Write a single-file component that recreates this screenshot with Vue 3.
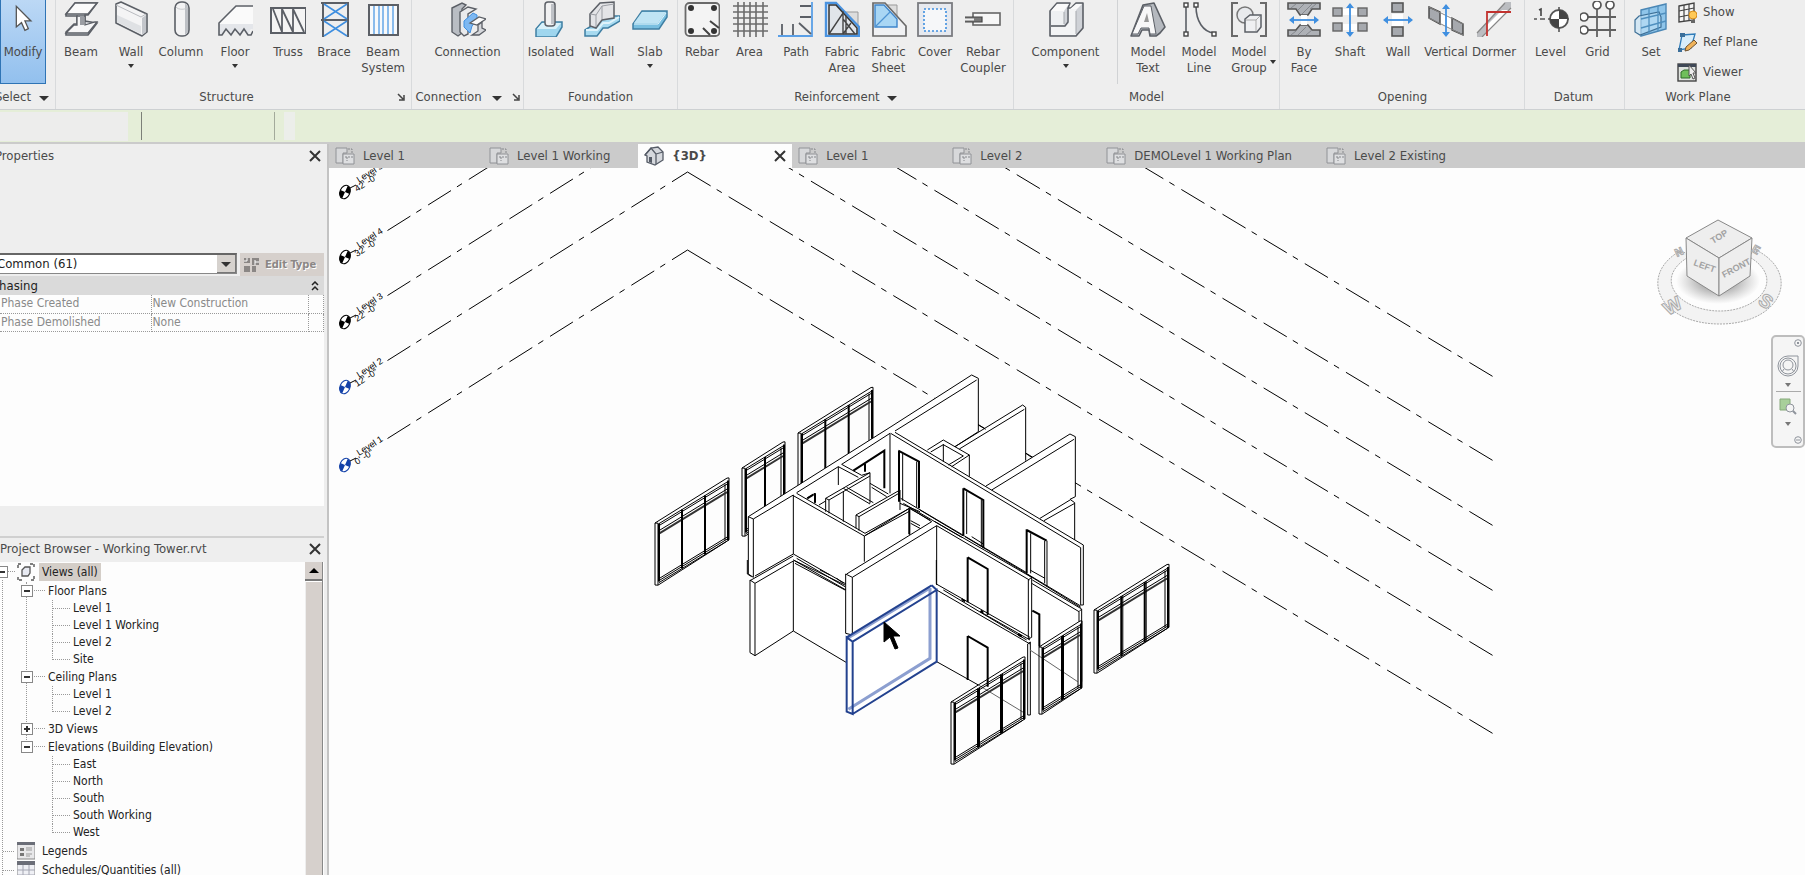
<script setup>
const G = '#5b5f66'
const B = '#3f8fe0'

const icons = {
  modify: `<path d="M12 5v24l6-5 4 9 4-2-4-9h7z" transform="translate(1 1) scale(.86)" fill="#fff" stroke="#555" stroke-width="1.5"/>`,
  beam: `<path d="M12 2H34L25 14H22V20L34 22L25 34H3V31L11 23H14V15H3V13Z" fill="#dfe1e5" stroke="${G}" stroke-width="1.6"/><path d="M12 2H34L25 13H3Z" fill="#fbfbfb" stroke="${G}" stroke-width="1.4"/><path d="M22 15V24L32 21H34L25 32H3L11 24H14V15Z" fill="#f6f6f7" stroke="${G}" stroke-width="1.3"/><path d="M17 15H21V24H17Z" fill="#9a9da3"/>`,
  wall: `<path d="M3 3L8 1L34 13V31L29 35L3 22Z" fill="#f4f4f5" stroke="${G}" stroke-width="1.6" stroke-linejoin="round"/><path d="M3 4L28 16L33 13" fill="none" stroke="#b9bbc0"/><path d="M29 17L33 14V31L29 34Z" fill="#c3c6cb"/><path d="M4 14L28 25V33L4 21Z" fill="#dfe1e4"/>`,
  column: `<rect x="12" y="1" width="14" height="34" rx="6" fill="#f3f3f4" stroke="${G}" stroke-width="1.6"/><path d="M22 3C24 3 25 5 25 7V31L22 34Z" fill="#bdc0c5"/><path d="M13 6C15 9 23 9 25 6" fill="none" stroke="#c8cacd"/>`,
  floor: `<path d="M36 4H19L2 22V34H6V30L10 27L14 33L18 27L22 33L26 27L29 33L32 33L35 27H36Z" fill="#fafafa"/><path d="M2 23H36V28H34L31 34L27 27L23 34L18 27L14 34L9 28L6 34H2Z" fill="#e4e6ea"/><path d="M36 5H19L2 22V34H5L9 28L14 34L18 28L23 34L27 28L31 34H34L36 30" fill="none" stroke="${G}" stroke-width="1.6"/>`,
  truss: `<path d="M1 7H36V32H1Z" fill="#f4f4f4" stroke="${G}" stroke-width="2"/><path d="M3 8L12 31V8L23 31V8L34 31" fill="none" stroke="${G}" stroke-width="1.8"/>`,
  brace: `<path d="M7 1V36M32 1V36M5 2H33M5 19H33" stroke="${G}" stroke-width="2"/><path d="M8 3L31 18M31 3L8 18M8 20L31 35M31 20L8 35" stroke="${B}" stroke-width="1.6"/>`,
  beamsystem: `<rect x="4" y="4" width="29" height="30" fill="#f7f9fb" stroke="${G}" stroke-width="2"/><path d="M9 5V33M14 5V33M18 5V33M23 5V33M28 5V33" stroke="#66a7e8" stroke-width="1.5"/>`,
  connection: `<path d="M2 7L12 2L16 4L12 8V32L8 35L2 31Z" fill="#b9bdc3" stroke="${G}" stroke-width="1.4"/><path d="M10 11L18 6L26 8L18 13V33L14 35L10 31Z" fill="#e9eaec" stroke="${G}" stroke-width="1.4"/><path d="M14 20L23 12L27 14V19L22 25L20 32L14 26Z" fill="#7db8f2" stroke="${B}"/><path d="M20 22L29 16L36 18L27 24Z" fill="#fafafa" stroke="${G}" stroke-width="1.3"/><path d="M28 24V30L22 34H29L36 29L32 27V21Z" fill="#d6d8dc" stroke="${G}" stroke-width="1.3"/>`,
  isolated: `<path d="M3 28L9 21H29V26L23 36H3Z" fill="#9fd6ee" stroke="#3f7fa3" stroke-width="1.5"/><path d="M4 28L9 22H28L23 28Z" fill="#d9f1fa"/><rect x="12" y="1" width="10" height="24" rx="3" fill="#f1f1f2" stroke="${G}" stroke-width="1.5"/><path d="M18 3H21V23H18Z" fill="#bfc2c7"/>`,
  fwall: `<path d="M1 29L9 24L13 20L28 15H36V20L24 27H19L13 35H1Z" fill="#a7daf0" stroke="#3f7fa3" stroke-width="1.5"/><path d="M2 29H13L19 22H25L35 16" fill="none" stroke="#dff3fb" stroke-width="2"/><path d="M6 13L16 2L30 1V17L18 19L12 27L6 25Z" fill="#e3e4e7" stroke="${G}" stroke-width="1.5"/><path d="M6 13L12 14L18 5L30 3M12 14V26M18 5V18" fill="none" stroke="#9b9ea4"/>`,
  slab: `<path d="M1 23L10 10H35V16L27 28H1Z" fill="#79bfe0" stroke="#3f7fa3" stroke-width="1.5"/><path d="M2 22L10 11H34L26 22Z" fill="#bfe4f4"/><path d="M2 23H26L34 12" fill="none" stroke="#e6f6fc"/>`,
  rebar: `<rect x="1.500" y="2" width="34" height="33" rx="4" fill="#f4f4f4" stroke="#6a6a6a" stroke-width="1.8"/><path d="M26 20L35 27M19 27L26 34" stroke="#444" stroke-width="2"/><g fill="#333"><circle cx="7" cy="7" r="3"/><circle cx="30" cy="7" r="3"/><circle cx="7" cy="30" r="3"/><circle cx="30" cy="30" r="3"/></g>`,
  area: `<path d="M6 1V36M12 1V36M18 1V36M24 1V36M31 1V36M1 5H36M1 11H36M1 17H36M1 23H36M1 30H36" stroke="#6c6c6c" stroke-width="1.6"/>`,
  path: `<path d="M34 1V35H0" fill="none" stroke="#5a9fe6" stroke-width="1.8"/><path d="M22 5H33M22 16H33M4 23V34M15 23V34M21 22L33 33" stroke="#5b5f66" stroke-width="1.8"/>`,
  fabricarea: `<path d="M15 11H34V30" fill="#ddd" stroke="#999"/><path d="M2 2H12L35 26V35H2Z" fill="#eef2f7" stroke="#4b93df" stroke-width="2.4"/><path d="M5 4V33H33V27L12 4Z" fill="#e1e5ea" stroke="#333" stroke-width="1.5"/><path d="M5 33L19 12V33M19 33L27 22M19 18L31 33M22 15V33" stroke="#444" stroke-width="1.4" fill="none"/>`,
  fabricsheet: `<path d="M14 4H26V28" fill="#ddd" stroke="#999"/><path d="M2 2H14L35 25V35H2Z" fill="#f0f1f3" stroke="#6a6a6a" stroke-width="1.7"/><path d="M4 4H13L26 18V26H4Z" fill="#a9d6f4" stroke="#3e85cb" stroke-width="1.4"/><path d="M4 26L19 11" stroke="#4f94d3" stroke-width="1.2"/>`,
  cover: `<rect x="1" y="2" width="34" height="33" fill="#e6e9ef" stroke="#7a7c80" stroke-width="1.8"/><rect x="7" y="8" width="22" height="22" fill="#f6f7f9" stroke="#3f8fe0" stroke-width="1.6" stroke-dasharray="2 2"/>`,
  coupler: `<rect x="8" y="12" width="27" height="12" fill="#f7f7f7" stroke="#666" stroke-width="1.6"/><path d="M0 16H17V21H0" fill="#777" stroke="#444" stroke-width="1.2"/><path d="M0 18.500H9" stroke="#eee" stroke-width="2"/>`,
  component: `<path d="M2 10L9 2H22L20 7H23L28 2H35V27L28 35H2Z" fill="#cfd2d7" stroke="${G}" stroke-width="1.6" stroke-linejoin="round"/><path d="M3 10L9 3H21L16 10ZM22 8L28 3H34L28 9Z" fill="#fafafa"/><path d="M3 10H16V24H3Z" fill="#eef0f2"/><path d="M21 8H28V34H3V26H17L21 22Z" fill="#f3f4f5"/><path d="M3 25H17L20 21V7" fill="none" stroke="${G}" stroke-width="1.400"/><path d="M16 11V23M28 10V33" stroke="#a5a8ad"/>`,
  modeltext: `<path d="M1 35L13 4L24 2L35 26L30 32L26 35H20L19 29H12L9 35Z" fill="#b5b9bf" stroke="${G}" stroke-width="1.6" stroke-linejoin="round"/><path d="M2 33L14 5H21L26 33H20L19 27H11L8 33Z" fill="#f7f7f8" stroke="${G}"/><path d="M14 21L17 12L19 21Z" fill="#999"/>`,
  modelline: `<path d="M5 5V32M15 5C15 20 22 31 33 32" fill="none" stroke="#5b5f66" stroke-width="1.6"/><g fill="#fff" stroke="#444" stroke-width="1.4"><rect x="3" y="2" width="4" height="4"/><rect x="3" y="31" width="4" height="4"/><rect x="13" y="2" width="4" height="4"/><rect x="31" y="31" width="4" height="4"/></g>`,
  modelgroup: `<path d="M7 2H1V35H7M29 2H35V35H29" fill="none" stroke="#6a6a6a" stroke-width="2"/><circle cx="14" cy="14" r="8" fill="#e8eaed" stroke="#777" stroke-width="1.5"/><path d="M14 18L19 14H30V26L26 31H14Z" fill="#eff0f2" stroke="${G}" stroke-width="1.5"/><path d="M15 19H25V30M25 19L29 15" fill="none" stroke="#aaa"/>`,
  byface: `<path d="M2 2H34V8H26L22 14H14L10 8H2Z M2 35H34V29H26L22 24H14L10 29H2Z" fill="#aeb1b6" stroke="#555" stroke-width="1.6"/><path d="M5 7L10 3M12 9L18 3M16 13L26 3M24 8L30 3M5 34L10 30M12 34L20 26M20 34L26 29" stroke="#85888d"/><path d="M15 14H21V24H15Z" fill="#fff"/><path d="M4 19H32" stroke="${B}" stroke-width="1.8"/><path d="M8 15L3 19L8 23ZM28 15L33 19L28 23Z" fill="${B}"/>`,
  shaft: `<g fill="#a6a9ae" stroke="#666" stroke-width="1.400"><rect x="1" y="7" width="9" height="8"/><rect x="26" y="7" width="9" height="8"/><rect x="1" y="22" width="9" height="8"/><rect x="26" y="22" width="9" height="8"/></g><path d="M11 8H25V14H11ZM11 23H25V29H11Z" fill="#fff"/><path d="M18 3V35" stroke="${B}" stroke-width="1.8"/><path d="M14 7L18 2L22 7ZM14 31L18 36L22 31Z" fill="${B}"/>`,
  owall: `<g fill="#a6a9ae" stroke="#555" stroke-width="1.600"><rect x="12" y="2" width="11" height="9"/><rect x="12" y="26" width="11" height="9"/></g><path d="M12 13H23V25H12Z" fill="#fff"/><path d="M4 19H32" stroke="${B}" stroke-width="1.8"/><path d="M8 15L3 19L8 23ZM28 15L33 19L28 23Z" fill="${B}"/>`,
  vertical: `<path d="M12 10L24 16V29L12 22Z" fill="#fff"/><path d="M1 6L12 11V23L1 17ZM24 17L35 23V34L24 29Z" fill="#a6a9ae" stroke="#444" stroke-width="1.400"/><path d="M1 6L35 23M1 17L35 34" stroke="#888"/><path d="M18 4V34" stroke="${B}" stroke-width="1.8"/><path d="M14 8L18 3L22 8ZM14 31L18 36L22 31Z" fill="${B}"/>`,
  dormer: `<path d="M1 32L29 1H35V7L6 36H1Z" fill="#bbbdc1"/><path d="M11 24L26 9H33L11 31Z" fill="#fff"/><path d="M1 32L29 2M6 36L35 7" stroke="#888" stroke-width="1.2"/><path d="M11 35V11H35" fill="none" stroke="#c2322f" stroke-width="1.8"/>`,
  level: `<path d="M1 18H4M7 18H12M15 18H36M26 6V31" stroke="#555" stroke-width="1.6"/><path d="M6 9L8 8V15" fill="none" stroke="#444" stroke-width="1.600"/><circle cx="26" cy="18" r="9" fill="#fff" stroke="#555" stroke-width="1.8"/><path d="M26 9A9 9 0 0 1 35 18H26ZM26 27A9 9 0 0 1 17 18H26Z" fill="#444"/>`,
  grid: `<path d="M8 16H36M8 29H36M17 8V36M30 8V36" stroke="#606060" stroke-width="1.8"/><g fill="#fff" stroke="#555" stroke-width="1.7"><circle cx="17" cy="4" r="4"/><circle cx="30" cy="4" r="4"/><circle cx="4" cy="16" r="4"/><circle cx="4" cy="29" r="4"/></g>`,
  set: `<path d="M8 9L33 3V28L8 35Z" fill="#8fc5ea" stroke="#4b87b5" stroke-width="1.4"/><path d="M2 19L6 15L26 11L28 16V26L7 34L2 31Z" fill="#c3e2f6" fill-opacity=".6" stroke="#3d6f96" stroke-width="1.2"/><path d="M16 7V33M25 5V30M8 18L33 12M8 27L33 20" stroke="#4f8fbe" stroke-width="1.3"/>`,
  show: `<path d="M2 4L17 1V18L2 20Z" fill="#f5f5f5" stroke="#444" stroke-width="1.4"/><path d="M7 3V19M12 2V18M2 9L17 6M2 15L17 12" stroke="#444" stroke-width="1.2"/><circle cx="16" cy="13" r="4" fill="#ffc957" stroke="#d58c1a"/><path d="M14 18H18V21H14Z" fill="#666"/>`,
  refplane: `<path d="M5 3L18 2L14 16L2 18Z" fill="#d8edfa" stroke="#2f7bb8" stroke-width="1.300"/><path d="M3 1H8V5H3ZM1 16H5V20H1Z" fill="#3b6f9a"/><path d="M9 15L17 8L20 11L12 18L8 19Z" fill="#f0b35a" stroke="#6e5230"/>`,
  viewer: `<rect x="1" y="2" width="18" height="17" fill="#dfe3df" stroke="#444" stroke-width="1.400"/><path d="M1 2H19V5H1Z" fill="#3f4856"/><path d="M4 10L7 8H13V16H4Z" fill="#6fbf5b" stroke="#2f6b29"/><path d="M12 3V14L14 12L16 17L18 16L16 11H19Z" fill="#eee" stroke="#555"/>`,
}

const panels = [
  { id: 'structure', title: 'Structure', launcher: true, tools: [
    { icon: 'beam', label: 'Beam' }, { icon: 'wall', label: 'Wall', menu: true }, { icon: 'column', label: 'Column' },
    { icon: 'floor', label: 'Floor', menu: true }, { icon: 'truss', label: 'Truss' }, { icon: 'brace', label: 'Brace' },
    { icon: 'beamsystem', label: 'Beam System' } ] },
  { id: 'connect', title: 'Connection', launcher: true, menu: true, tools: [{ icon: 'connection', label: 'Connection' }] },
  { id: 'foundation', title: 'Foundation', tools: [
    { icon: 'isolated', label: 'Isolated' }, { icon: 'fwall', label: 'Wall' }, { icon: 'slab', label: 'Slab', menu: true } ] },
  { id: 'reinforcement', title: 'Reinforcement', menu: true, tools: [
    { icon: 'rebar', label: 'Rebar' }, { icon: 'area', label: 'Area' }, { icon: 'path', label: 'Path' },
    { icon: 'fabricarea', label: 'Fabric Area' }, { icon: 'fabricsheet', label: 'Fabric Sheet' },
    { icon: 'cover', label: 'Cover' }, { icon: 'coupler', label: 'Rebar Coupler' } ] },
  { id: 'model', title: 'Model', tools: [
    { icon: 'component', label: 'Component', menu: true, divided: true }, { icon: 'modeltext', label: 'Model Text' },
    { icon: 'modelline', label: 'Model Line' }, { icon: 'modelgroup', label: 'Model Group', sideMenu: true } ] },
  { id: 'opening', title: 'Opening', tools: [
    { icon: 'byface', label: 'By Face' }, { icon: 'shaft', label: 'Shaft' }, { icon: 'owall', label: 'Wall' },
    { icon: 'vertical', label: 'Vertical' }, { icon: 'dormer', label: 'Dormer' } ] },
  { id: 'datums', title: 'Datum', tools: [{ icon: 'level', label: 'Level' }, { icon: 'grid', label: 'Grid' }] },
  { id: 'workplane', title: 'Work Plane', tools: [{ icon: 'set', label: 'Set' }],
    links: [{ icon: 'show', label: 'Show' }, { icon: 'refplane', label: 'Ref Plane' }, { icon: 'viewer', label: 'Viewer' }] },
]

const tabs = [
  { label: 'Level 1' }, { label: 'Level 1 Working' }, { label: '{3D}', active: true }, { label: 'Level 1' },
  { label: 'Level 2' }, { label: 'DEMOLevel 1 Working Plan' }, { label: 'Level 2 Existing' },
]

const groups = [
  { label: 'Floor Plans', open: true, items: ['Level 1', 'Level 1 Working', 'Level 2', 'Site'] },
  { label: 'Ceiling Plans', open: true, items: ['Level 1', 'Level 2'] },
  { label: '3D Views', open: false, items: [] },
  { label: 'Elevations (Building Elevation)', open: true, items: ['East', 'North', 'South', 'South Working', 'West'] },
]

const levels = [
  { name: 'Level 1', height: "0' -0\"", y: 438, color: '#1240a8' },
  { name: 'Level 2', height: "12' -0\"", y: 360, color: '#1240a8' },
  { name: 'Level 3', height: "22' -0\"", y: 295, color: '#000' },
  { name: 'Level 4', height: "32' -0\"", y: 230, color: '#000' },
  { name: 'Level 5', height: "42' -0\"", y: 165, color: '#000' },
  { name: '', height: '', y: 81, color: '#000' },
]

// Isometric curtain panel: rails, transom and mullions from its left edge, width and height
function curtain(x, y, w, h, bays) {
  const at = (dx, dy) => `${(x + dx).toFixed(1)} ${(y + dy - dx * 0.61).toFixed(1)}`
  const rail = (dy, from = 4) => `M${at(from, dy)}L${at(w - 2, dy)}`
  let thick = `M${at(4, 3)}L${at(4, h - 1)}M${at(w - 1, 2)}L${at(w - 1, h)}`
  let pale = ''
  for (let i = 1; i < bays; i++) {
    const dx = 4 + ((w - 5) * i) / bays
    thick += `M${at(dx, 3)}L${at(dx, h)}`
    pale += `M${at(dx + 1.500, 3)}L${at(dx + 1.500, h)}`
  }
  return {
    thin: `M${at(0, 0)}L${at(w - 2, -1)}L${at(w, 0)}V${(y + h - w * 0.61).toFixed(1)}L${at(3, h + 2)}L${at(0, h)}Z` +
      `M${at(0, 0)}L${at(3, 2)}V${(y + h).toFixed(1)}M${at(w - 4, 4)}L${at(w - 4, h - 2)}` + rail(3) + rail(5) + rail(10) + rail(h) + rail(h - 2) + rail(h - 4),
    thick, pale, bold: rail(13),
  }
}
const rear = [curtain(655, 523, 74, 62, 3), curtain(742, 468, 43, 68, 2), curtain(798, 433, 75, 62, 3)]
const front = [curtain(951, 702, 74, 62, 3), curtain(1039, 647, 43, 67, 2), curtain(1094, 610, 75, 63, 3)]
</script>

<template>
  <div class="app">
    <header class="ribbon">
      <section class="panel select">
        <div class="tools">
          <button class="tool current" type="button">
            <svg class="icon" viewBox="0 0 36 36" aria-hidden="true" v-html="icons.modify"></svg>
            <span class="label">Modify</span>
          </button>
        </div>
        <h2 class="title"><span>Select</span><i class="caret wide"></i></h2>
      </section>
      <section v-for="p in panels" :key="p.id" class="panel" :class="p.id">
        <div class="tools">
          <button v-for="t in p.tools" :key="t.icon" class="tool" :class="{ divided: t.divided }" type="button">
            <svg class="icon" viewBox="0 0 36 36" aria-hidden="true" v-html="icons[t.icon]"></svg>
            <span class="label">{{ t.label }}</span>
            <i v-if="t.menu" class="caret"></i>
            <i v-if="t.sideMenu" class="caret side"></i>
          </button>
          <div v-if="p.links" class="links">
            <button v-for="l in p.links" :key="l.icon" class="link" type="button">
              <svg viewBox="0 0 20 21" aria-hidden="true" v-html="icons[l.icon]"></svg>{{ l.label }}
            </button>
          </div>
        </div>
        <h2 class="title">
          <span>{{ p.title }}</span><i v-if="p.menu" class="caret wide"></i>
          <svg v-if="p.launcher" class="launcher" viewBox="0 0 8 8"><path d="M1 1L6 6M7 2V7H2" fill="none" stroke="#444" stroke-width="1.500" /></svg>
        </h2>
      </section>
    </header>

    <div class="options"><span class="slot"></span><span class="rule dark"></span><span class="rule"></span><span class="chip"></span></div>

    <div class="body">
      <aside class="dock">
        <section class="props">
          <div class="head">
            <h3 class="cut">Properties</h3>
            <button class="close" type="button" aria-label="Close Properties"><svg viewBox="0 0 12 12"><path d="M1 1L11 11M11 1L1 11" /></svg></button>
          </div>
          <div class="preview"></div>
          <div class="type">
            <div class="combo">
              <select aria-label="Selection filter"><option>Common (61)</option></select>
              <span class="drop"><i class="caret wide"></i></span>
            </div>
            <button class="edit" type="button">
              <svg viewBox="0 0 16 16"><path d="M0 1H6V6H0ZM0 9H6V15H0ZM8 1H15V8H8ZM8 9H12V15H8Z" fill="#8b8785" /><path d="M0 4H3M3 1V4M11 3V8M11 5H15" stroke="#fff" /></svg>Edit Type
            </button>
          </div>
          <div class="category"><span>Phasing</span>
            <svg viewBox="0 0 8 10"><path d="M1 4L4 1L7 4M1 9L4 6L7 9" fill="none" stroke="#222" stroke-width="1.500" /></svg>
          </div>
          <table>
            <tbody>
              <tr><th scope="row">Phase Created</th><td>New Construction</td><td class="end"></td></tr>
              <tr><th scope="row">Phase Demolished</th><td>None</td><td class="end"></td></tr>
            </tbody>
          </table>
          <div class="blank"></div>
          <div class="apply"></div>
        </section>

        <section class="browser">
          <div class="head">
            <h3>Project Browser - Working Tower.rvt</h3>
            <button class="close" type="button" aria-label="Close Project Browser"><svg viewBox="0 0 12 12"><path d="M1 1L11 11M11 1L1 11" /></svg></button>
          </div>
          <div class="scroll">
            <ul class="tree">
              <li>
                <div class="row root">
                  <button class="toggle half" type="button" aria-label="Collapse Views"><i class="minus"></i></button>
                  <i class="dots short"></i>
                  <svg class="glyph" viewBox="0 0 18 18"><path d="M1 5V1H5M13 1H17V5M17 13V17H13M5 17H1V13" fill="none" stroke="#555" stroke-width="1.400" stroke-dasharray="3 1" /><path d="M5 7L8 4H13V10L11 13H5Z" fill="#e8eaf2" stroke="#555" stroke-width="1.300" /></svg>
                  <span class="picked">Views (all)</span>
                </div>
                <ul class="groups">
                  <li v-for="g in groups" :key="g.label" class="group">
                    <div class="row">
                      <button class="toggle" type="button" :aria-label="g.label"><i class="minus"></i><i v-if="!g.open" class="plus"></i></button>
                      <i class="dots"></i><span>{{ g.label }}</span>
                    </div>
                    <ul v-if="g.items.length" class="leaves">
                      <li v-for="i in g.items" :key="i"><i class="dots leafdots"></i>{{ i }}</li>
                    </ul>
                  </li>
                </ul>
              </li>
              <li class="row flat"><i class="dots"></i>
                <svg class="glyph" viewBox="0 0 18 18"><rect x="0" y="0" width="18" height="17" fill="#e8e8ea" stroke="#888" /><path d="M0 0H18V3H0Z" fill="#6b6e78" /><path d="M3 6H7V9H3Z M3 11H7V14H3Z" fill="#777" /><path d="M9 6H15M9 8H15M9 12H15M9 14H13" stroke="#999" /></svg>
                <span>Legends</span>
              </li>
              <li class="row flat"><i class="dots"></i>
                <svg class="glyph" viewBox="0 0 18 18"><rect x="0" y="0" width="18" height="18" fill="#eff0f5" stroke="#888" /><path d="M0 0H18V4H0Z" fill="#6b6e78" /><path d="M0 9H18M0 14H18M6 4V18M12 4V18" stroke="#a4a6b2" /></svg>
                <span>Schedules/Quantities (all)</span>
              </li>
            </ul>
            <div class="bar"><button type="button" aria-label="Scroll up"><i class="up"></i></button><div class="thumb"></div></div>
          </div>
        </section>
      </aside>

      <main class="work">
        <nav class="tabs">
          <a v-for="(t, i) in tabs" :key="i" href="#" class="tab" :class="{ active: t.active }">
            <svg v-if="t.active" class="tabicon" viewBox="0 0 20 20"><path d="M1 9L7 2L14 1L19 6V14L11 19L3 16V10Z" fill="#d5d8dd" stroke="#555b66" stroke-width="1.300" /><path d="M1 9L7 2L12 8V18M12 8L19 6" fill="none" stroke="#555b66" stroke-width="1.300" /><path d="M5 11H8V17L5 16Z" fill="#555b66" /></svg>
            <svg v-else class="tabicon" viewBox="0 0 20 20"><path d="M1 2H12V7H8V17H1Z" fill="#d7d8da" stroke="#909296" /><path d="M8 8H19V18H8Z" fill="#dedfe1" stroke="#909296" /><path d="M13 3H17V8M10 11H18M12 11V15" fill="none" stroke="#85878b" stroke-dasharray="2 1" /></svg>
            <span>{{ t.label }}</span>
            <svg v-if="t.active" class="x" viewBox="0 0 12 12"><path d="M1 1L11 11M11 1L1 11" /></svg>
          </a>
        </nav>
        <div class="view">
          <svg class="drawing" role="img" aria-label="3D view of the building">
            <g transform="translate(-329 -168)" fill="none" stroke="#000">
              <g v-for="l in levels" :key="l.y">
                <path class="datum" :d="`M387.500 ${l.y + 0.5}L687.500 ${l.y - 188}`" />
                <path class="datum" :d="`M687.500 ${l.y - 188}L1497 ${l.y + 298}`" />
                <g v-if="l.name" :transform="`translate(345 ${l.y + 27})`">
                  <g transform="rotate(24)">
                    <ellipse rx="5" ry="7" fill="#fff" :stroke="l.color" />
                    <path d="M0 0V-7A5 7 0 0 1 5 0ZM0 0V7A5 7 0 0 1 -5 0Z" :fill="l.color" stroke="none" />
                  </g>
                  <path d="M5 -4L11 -7" />
                  <text x="14" y="-9" transform="rotate(-32 14 -9)">{{ l.name }}</text>
                  <text x="12" y="0" transform="rotate(-32 12 0)">{{ l.height }}</text>
                </g>
              </g>

              <g v-for="(w, i) in rear" :key="i"><path :d="w.thin" /><path :d="w.bold" stroke-width="2" stroke="#333" /><path :d="w.thick" stroke-width="2" /></g>

              <path fill="#fff" stroke="none" d="M748 517L972 375L978 378V432L1023 405L1026 407V461L1070 434L1075 437V497L1070 500L1075 503V540L1083 545V690L1028 716L936 661L853 713L847 711V663L793 632L756 655L750 652V580L748 575Z" />

              <g transform="translate(640 370) scale(.33333)">
                <path d="M325 440L340 447V622L325 612ZM325 440L750 172L995 15M340 447L460 375V552L345 618M470 368L595 290V345M605 283L750 190V370M470 370L675 490L808 415L870 450M460 377L673 498V575M673 498L808 424M808 415V495M460 552L618 642M470 565L615 650M460 570L618 660M330 632L460 558M540 600L570 615M590 625L610 640" />
                <path d="M557 385L690 308V400M557 385L567 390V430M567 390L690 318M557 385V425M610 355L690 402M610 365V455M620 352L700 398M648 435L780 360V420M648 435L657 440V482M657 440L780 368M648 435V475M537 405L557 393M595 290L655 322M605 283L665 316L690 308M690 340L745 372M695 352L740 380M780 400L840 425M500 385L525 370V400" />
                <path class="fat" d="M640 302L733 242V355M675 282V305M525 370V398M502 385L520 374M808 418V492" />
                <path d="M812 452L840 467M812 460L840 475" />
              </g>

              <g transform="translate(840 370) scale(.33333)">
                <path d="M395 15L415 25V185M165 183L410 30M165 187L730 525V705H722V533L152 190M262 240L310 210L388 255L335 290M272 246L310 224L370 258L325 285M310 222V275M388 255V320M345 230L548 105L557 112V272M358 237L553 118M415 165L437 178M415 185L345 230M557 250L575 262M438 348L690 192L706 200V380L690 388L704 398V510M455 360L702 208M600 445L690 390M612 452L704 400" />
                <path d="M182 385L560 608M190 400L365 502M375 500L722 708M395 500L430 522M560 612L722 712M570 600L615 625M20 612L275 455L208 413M37 622L290 467V645M285 455L575 622M290 467L568 630M17 612L37 622V795L17 790ZM565 630L575 622V802L565 807ZM208 415L75 497" />
                <path class="fat" d="M175 242L237 275V415M177 242V395M370 355L430 390V535M370 355V495M383 562L443 597V735M383 562V697M560 480L620 512M560 478V610" />
                <path d="M188 252V392M230 275V412M380 364V492M424 390V530M572 490V610M614 512V640M621 512V650M240 420L370 498" />
              </g>

              <g transform="translate(730 560) scale(.33333)">
                <path d="M60 60L75 70V287L60 278ZM52 0V42L65 50M75 70L190 3V213L75 287M190 213L350 308M619 0V72L900 232M620 90L900 252M640 90L890 240M195 10L345 90M190 0L345 75" />
                <path d="M620 305L745 375" /><path stroke="#666" d="M745 375L885 460" />
                <path class="fat" d="M713 228L773 263V380M713 228V360M695 117L705 124M752 152L760 158M865 222L875 228" />
                <path class="halo" d="M600 84V295L355 448" />
                <path class="halo" d="M354 234L600 84" />
                <path class="blue" d="M350 232L605 76M350 232L368 245V462L350 455ZM368 245L620 90V305L368 462M605 76L620 90" />
              </g>

              <g transform="translate(980 540) scale(.33333)">
                <path d="M157 120L305 207V425M155 130L297 215L305 207M297 215V245M143 312L151 306V525H143ZM0 215L150 300" />
                <path stroke="#666" d="M150 330L293 425" />
                <path class="fat" d="M157 212L178 223V320M115 284L125 290" />
              </g>

              <g v-for="(w, i) in front" :key="'f' + i"><path :d="w.thin" /><path :d="w.bold" stroke-width="2" stroke="#333" /><path :d="w.thick" stroke-width="2" /><path :d="w.pale" /></g>

              <path d="M884 622V642L890 637L895 649L898 648L893 636H900Z" fill="#000" />
            </g>
          </svg>

          <svg class="cube" viewBox="0 0 130 112" role="img" aria-label="View cube">
            <defs><radialGradient id="shade"><stop offset=".3" stop-color="#777" stop-opacity=".7" /><stop offset="1" stop-color="#999" stop-opacity="0" /></radialGradient></defs>
            <path d="M26 34C-16 58 4 107 66 107C126 107 148 58 104 34L92 38C134 60 106 94 66 94C24 94 -4 60 38 38Z" fill="#f3f3f3" stroke="#aaa" stroke-dasharray="2 1" />
            <ellipse cx="64" cy="64" rx="42" ry="23" fill="url(#shade)" />
            <g fill="#eee" stroke="#888"><path d="M32 21L64 3L98 21L65 41Z" /><path d="M32 21L65 41V79L33 59Z" /><path d="M98 21L65 41V79L96 59Z" /></g>
            <g class="facetext"><text x="59" y="27" transform="rotate(-32 59 27)">TOP</text><text x="39" y="48" transform="rotate(20 39 48)">LEFT</text><text x="70" y="61" transform="rotate(-28 70 61)">FRONT</text></g>
            <g class="compass"><text x="14" y="99" transform="rotate(-30 14 99)">W</text><text x="103" y="86" transform="rotate(34 103 86)">S</text><text class="far" x="23" y="40" transform="rotate(-25 23 40)">N</text><text class="far" x="97" y="34" transform="rotate(30 97 34)">E</text></g>
          </svg>

          <div class="navbar">
            <button class="dot" type="button" aria-label="Close"><svg viewBox="0 0 8 8"><circle cx="4" cy="4" r="3.300" /><path d="M3 3L5 5M5 3L3 5" /></svg></button>
            <button class="wheel" type="button" aria-label="Steering wheel"><svg viewBox="0 0 22 22"><path d="M11 1H21V11A10 10 0 1 1 11 1Z" /><circle cx="11" cy="11" r="8" /><circle cx="11" cy="10" r="5" /><path d="M7 14L5 17M15 14L17 17" /></svg></button>
            <i class="caret"></i>
            <hr>
            <button class="zoom" type="button" aria-label="Zoom"><svg viewBox="0 0 18 18"><path d="M1 1H11V12H1Z" fill="#a8cf9a" stroke="#86a97b" /><circle cx="11" cy="10" r="4" fill="#f4f4f4" /><path d="M14 13L17 16" stroke-width="2" /></svg></button>
            <i class="caret"></i>
            <button class="dot low" type="button" aria-label="Minimize"><svg viewBox="0 0 8 8"><circle cx="4" cy="4" r="3.300" /><path d="M2 4H6" /></svg></button>
          </div>
        </div>
      </main>
    </div>
  </div>
</template>

<style>
html, body { background: #fff; overflow: hidden; }
</style>

<style scoped>
.app { display: flex; flex-direction: column; height: 100vh; overflow: hidden; font: 13px/16px "DejaVu Sans Condensed", "Noto Sans", sans-serif; color: #4a4a4a; }
.app *, .app *::before { box-sizing: border-box; }
button { font: inherit; color: inherit; background: none; border: 0; padding: 0; margin: 0; }
ul { list-style: none; margin: 0; padding: 0; }
h2, h3 { font: inherit; margin: 0; }
a { color: inherit; text-decoration: none; }
.ribbon { display: flex; flex: none; height: 110px; background: #eee; border-bottom: 1px solid #cdd0d2; }
.panel { display: flex; flex-direction: column; flex: none; border-right: 1px solid #d8dadc; }
.tools { display: grid; height: 85px; justify-content: start; }
.tool { display: flex; flex-direction: column; align-items: center; position: relative; padding-top: 1px; height: 84px; }
.icon { width: 36px; height: 36px; flex: none; margin-bottom: 7px; }
.label { width: min-content; text-align: center; }
.current { background: linear-gradient(#bcd8f5, #92c0ee); border: 1px solid #2f74b5; border-top: 0; }
.divided { border-right: 1px solid #d0d2d4; }
.title { display: flex; align-items: center; justify-content: center; gap: 10px; height: 24px; }
.title span { white-space: nowrap; }
.launcher { width: 8px; height: 8px; }
.structure .title span { margin-left: auto; }
.structure .launcher { margin-left: auto; margin-right: 6px; }
.structure .title { gap: 0; }
.select { width: 56px; }
.select .tools { grid-template-columns: 46px; }
.select .title { justify-content: flex-end; padding-right: 6px; gap: 8px; }
.structure { width: 356px; }
.structure .tools { grid-template-columns: 50px 50px 50px 58px 48px 44px 54px; }
.connect { width: 112px; }
.connect .tools { grid-template-columns: 111px; }
.foundation { width: 154px; }
.foundation .tools { grid-template-columns: 54px 48px 48px; }
.reinforcement { width: 336px; }
.reinforcement .tools { grid-template-columns: 48px 47px 46px 46px 47px 46px 50px; }
.reinforcement .title { gap: 7px; }
.model { width: 266px; }
.model .tools { grid-template-columns: 104px 60px 42px 58px; }
.opening { width: 245px; padding-left: 1px; }
.opening .tools { grid-template-columns: 46px 46px 50px 46px 50px; }
.datums { width: 100px; padding-left: 2px; }
.datums .tools { grid-template-columns: 47px 47px; }
.datums .title { padding-right: 4px; }
.workplane { flex: 1; border-right: 0; }
.workplane .tools { grid-template-columns: 52px 1fr; justify-content: stretch; }
.workplane .title { width: 146px; }
.caret { display: block; width: 0; height: 0; margin-top: 4px; border: 3px solid transparent; border-top: 4px solid #333; border-bottom: 0; }
.caret.wide { margin-top: 2px; border-width: 5px 5px 0; }
.caret.side { position: absolute; right: 2px; top: 56px; }
.links { display: flex; flex-direction: column; }
.link { display: flex; align-items: center; gap: 6px; height: 30px; padding-bottom: 6px; white-space: pre; }
.link svg { width: 20px; height: 21px; }
.options { display: flex; flex: none; height: 34px; padding-top: 2px; background: #e5eed8; border-bottom: 2px solid #cbcbcb; }
.slot { width: 128px; height: 29px; background: #ededec; }
.rule { width: 1px; height: 28px; margin-left: 132px; background: #a3aa9b; }
.rule.dark { margin-left: 13px; background: #7c8078; }
.chip { width: 11px; height: 28px; margin-left: 9px; background: #eceeea; }
.body { display: flex; flex: 1; min-height: 0; }
.dock { display: flex; flex-direction: column; flex: none; width: 329px; padding-right: 3px; background: #eee; border-right: 2px solid #c3c3c3; color: #333; }
.head { display: flex; align-items: center; justify-content: space-between; height: 24px; padding-right: 3px; padding-bottom: 1px; white-space: nowrap; color: #4a4a4a; }
.head .cut { margin-left: -5px; }
.close { width: 12px; height: 12px; display: flex; }
.close svg, .x { width: 12px; height: 12px; fill: none; stroke: #333; stroke-width: 2; }
.preview { height: 85px; }
.type { display: flex; gap: 3px; height: 23px; font-size: 12px; }
.combo { display: flex; flex: 1; height: 21px; background: #fff; border: 1px solid #888; border-top: 2px solid #666; border-left: 0; }
.combo select { flex: 1; min-width: 0; appearance: none; border: 0; background: #fff; padding: 0; margin-left: -3px; font: inherit; font-size: 13px; color: #222; }
.drop { display: grid; place-items: center; width: 19px; background: #d6d2ce; border: 1px solid #777; border-width: 0 1px 1px 0; }
.edit { display: flex; align-items: center; gap: 5px; width: 84px; padding-left: 4px; background: #d6d0cc; color: #8b8785; font-size: 11px; font-weight: bold; text-shadow: 1px 1px #fff; white-space: nowrap; }
.edit svg { width: 16px; height: 16px; flex: none; }
.category { display: flex; align-items: center; justify-content: space-between; height: 19px; padding-right: 5px; background: #dadada; color: #222; }
.category span { margin-left: -8px; }
.category svg { width: 8px; height: 10px; }
table { width: 100%; border-collapse: collapse; table-layout: fixed; background: #fdfdfd; color: #8a8a8a; font-size: 12px; }
th, td { height: 18px; padding: 0 0 1px 1px; font-weight: normal; text-align: left; border-bottom: 1px dotted #999; border-right: 1px dotted #999; line-height: 16px; }
th { width: 151px; }
.end { width: 15px; }
.blank { height: 174px; background: #fdfdfd; }
.apply { height: 30px; }
.browser { display: flex; flex-direction: column; flex: 1; min-height: 0; border-top: 2px solid #d0d0d0; }
.scroll { display: flex; flex: 1; min-height: 0; background: #fdfdfd; overflow: hidden; }
.tree { flex: 1; position: relative; font-size: 12px; color: #222; }
.tree::before { content: ""; position: absolute; left: 2px; top: 18px; bottom: 0; border-left: 1px dotted #999; }
.row { display: flex; align-items: center; height: 18px; white-space: nowrap; }
.root { height: 20px; }
.picked { padding: 1px 3px 1px 3px; margin-left: 4px; background: #d4cec8; }
.glyph { width: 18px; height: 18px; flex: none; }
.toggle { position: relative; width: 12px; height: 12px; flex: none; background: #fff; border: 1px solid #888; }
.toggle.half { width: 8px; border-left: 0; }
.minus { position: absolute; left: 2px; right: 2px; top: 4px; height: 2px; background: #333; }
.half .minus { left: 0; }
.plus { position: absolute; top: 2px; bottom: 2px; left: 4px; width: 2px; background: #333; }
.dots { width: 11px; margin: 0 3px 0 1px; flex: none; border-top: 1px dotted #999; }
.dots.short { width: 7px; margin: 0 2px 0 0; }
.groups { position: relative; padding-left: 21px; }
.groups::before { content: ""; position: absolute; left: 26px; top: 0; height: 160px; border-left: 1px dotted #999; }
.leaves { padding-left: 31px; }
.leaves li { position: relative; display: flex; align-items: center; height: 17px; white-space: nowrap; }
.leaves li::before { content: ""; position: absolute; left: 0; top: 0; height: 17px; border-left: 1px dotted #999; }
.leaves li:last-child::before { height: 9px; }
.leafdots { width: 18px; margin: 0 3px 0 0; }
.group:last-child .leaves { padding-bottom: 1px; }
.flat { height: 19px; }
.flat .dots { margin: 0 3px 0 3px; }
.flat span { margin-left: 7px; }
.bar { display: flex; flex-direction: column; width: 18px; margin-right: 1px; background: #d6d0cc; border-right: 1px solid #888; }
.bar button { display: grid; place-items: center; height: 19px; border-bottom: 2px solid #777; }
.up { border: 5px solid transparent; border-bottom-color: #000; border-top: 0; }
.thumb { flex: 1; border-left: 1px solid #eee; border-top: 1px solid #fff; }
.work { display: flex; flex-direction: column; flex: 1; min-width: 0; }
.tabs { display: flex; flex: none; height: 24px; background: #cbcbcb; color: #4a4a4a; }
.tab { display: flex; align-items: center; gap: 8px; min-width: 154px; padding: 0 28px 0 6px; white-space: nowrap; }
.tabicon { width: 20px; height: 20px; flex: none; }
.active { background: #fdfdfd; font-weight: bold; padding-right: 6px; }
.active .x { margin-left: auto; }
.view { position: relative; flex: 1; min-height: 0; background: #fdfdfd; overflow: hidden; }
.drawing { display: block; width: 100%; height: 100%; }
.drawing text { font: 9px "Liberation Sans", sans-serif; fill: #000; stroke: none; white-space: pre; }
.drawing .datum { stroke-dasharray: 27 7 6 8; }
.drawing path { stroke-width: 1; vector-effect: non-scaling-stroke; }
.drawing path[stroke-width="2"] { stroke-width: 2px; }
.drawing .fat { stroke-width: 2px; }
.drawing .blue { stroke: #23428f; stroke-width: 2px; }
.drawing .halo { stroke: #8c9fd0; stroke-width: 3px; }
.cube { position: absolute; right: 21px; top: 49px; width: 130px; height: 112px; }
.facetext text { font: bold 9px "Liberation Sans", sans-serif; fill: #a2a2a2; }
.compass text { font: bold 19px "Liberation Sans", sans-serif; fill: #eee; stroke: #aaa; }
.compass text.far { font-size: 11px; }
.navbar { position: absolute; right: 0; top: 167px; display: flex; flex-direction: column; align-items: center; width: 34px; height: 113px; padding: 2px 0; background: #f5f5f5; border: 2px solid #bdbdbd; border-radius: 5px; }
.navbar svg { display: block; width: 100%; fill: none; stroke: #8f949c; }
.dot { width: 8px; align-self: flex-end; margin-right: 1px; }
.dot.low { margin-top: auto; }
.wheel { width: 22px; margin-top: 8px; }
.zoom { width: 18px; }
.navbar .caret { margin-top: 6px; border-top-color: #777; }
.navbar hr { width: 25px; margin: 4px 0 6px; border: 0; border-top: 1px solid #aaa; }
</style>
